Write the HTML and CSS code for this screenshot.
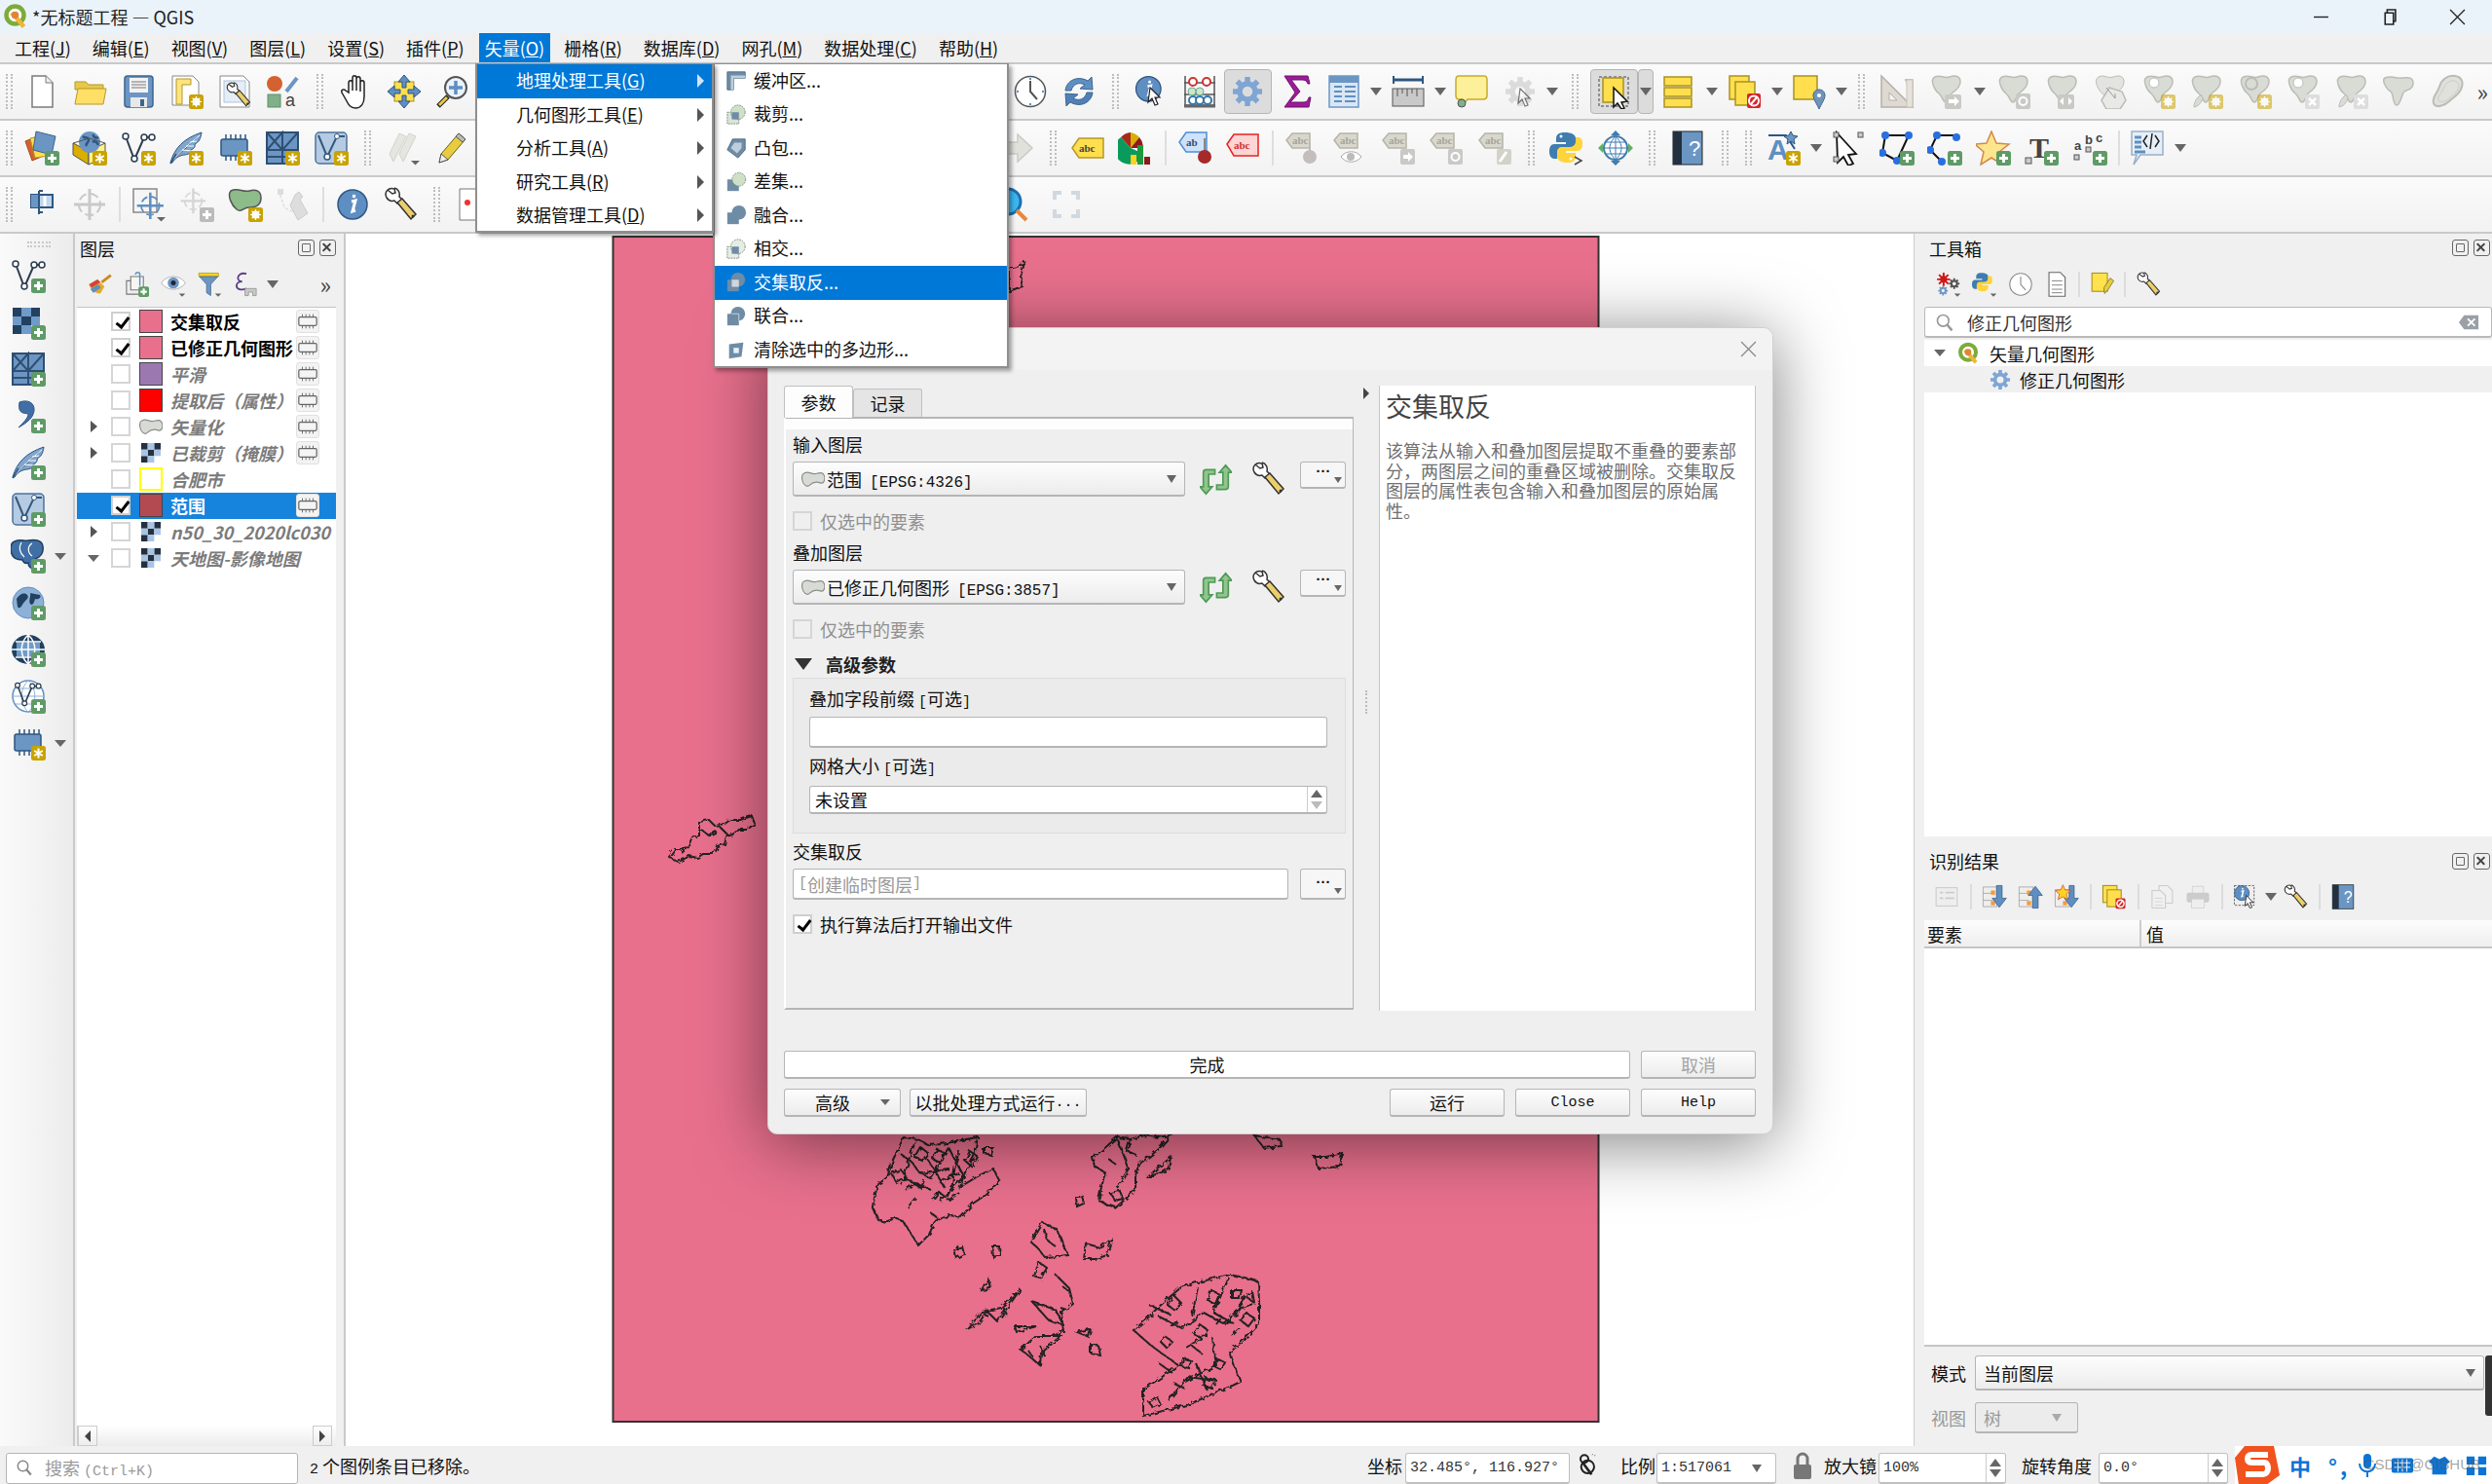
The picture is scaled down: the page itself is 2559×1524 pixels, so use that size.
FILE: index.html
```html
<!DOCTYPE html>
<html lang="zh-CN">
<head>
<meta charset="utf-8">
<title>*无标题工程 — QGIS</title>
<link rel="stylesheet" href="styles.css">
</head>
<body>
<svg class="defs" aria-hidden="true"><defs>
<g id="bp"><rect x="21" y="21" width="15" height="15" rx="2.5" fill="#5f9b66"/><path d="M28.5 24v9M24 28.5h9" stroke="#fff" stroke-width="3"/></g>
<g id="bs"><rect x="21" y="21" width="15" height="15" rx="2.5" fill="#c9a300"/><path d="M28.5 23.5v10M24.2 26l8.6 5M24.2 31l8.6-5" stroke="#fff" stroke-width="2"/></g>
<g id="bo"><rect x="21" y="21" width="15" height="15" rx="2.5" fill="#c9a300"/><circle cx="28.5" cy="28.5" r="3" fill="none" stroke="#fff" stroke-width="2"/><path d="M28.5 23v11M23 28.5h11M24.6 24.6l7.8 7.8M32.4 24.6l-7.8 7.8" stroke="#fff" stroke-width="1.2"/></g>
<g id="dn"><path d="M26 31h9l-4.500 4.500z" fill="#666"/></g>
<path id="blobp" d="M7 3c6-3 9 2 15 0s11-1 11 5-6 10-9 12c-3 3-3 9-6 9s-3-6-7-9C7 17 1 6 7 3z"/>
<g id="vv"><path d="M5 6l9 24L24 7h7" fill="none" stroke="#2c3e50" stroke-width="2"/><circle cx="5" cy="6" r="3" fill="#fff" stroke="#2c3e50" stroke-width="1.500"/><circle cx="14" cy="29" r="3" fill="#fff" stroke="#2c3e50" stroke-width="1.500"/><circle cx="24" cy="7" r="3" fill="#fff" stroke="#2c3e50" stroke-width="1.500"/><circle cx="32" cy="7" r="3" fill="#fff" stroke="#2c3e50" stroke-width="1.500"/></g>
<g id="feather"><path d="M2 33C6 18 16 8 34 2c-1 7-3 10-7 12 1 2-1 5-4 6 0 3-3 5-7 5-5 1-9 3-12 8z" fill="#7ea6cf" stroke="#2f5680"/><path d="M4 31C12 22 20 15 32 5M14 20l10 1M18 16l8 0M22 12l7-1" stroke="#fff"/><path d="M2 34L8 24" stroke="#2f5680" stroke-width="1.500"/></g>
<g id="chipg"><rect x="4" y="9" width="27" height="17" rx="2" fill="#6b96c4" stroke="#2f5680" stroke-width="1.500"/><path d="M9 4v5M14 4v5M19 4v5M24 4v5M29 4v5M9 26v5M14 26v5M19 26v5" stroke="#2f5680" stroke-width="1.500"/></g>
<g id="meshg"><rect x="2" y="2" width="32" height="32" fill="#6b96c4" stroke="#2f4f72" stroke-width="2"/><path d="M2 2l16 18V2L2 20M18 20L34 2M2 20h32M18 20v14M2 27h32" fill="none" stroke="#2f4f72" stroke-width="2"/></g>
<g id="vrg"><rect x="2" y="2" width="32" height="32" rx="4" fill="#b5cbe3" stroke="#4c739b" stroke-width="1.500"/><path d="M5 5l9 22L24 6h8" fill="none" stroke="#35587d" stroke-width="2"/><circle cx="14" cy="27" r="3" fill="#fff" stroke="#35587d" stroke-width="1.500"/><circle cx="24" cy="6" r="2.500" fill="#fff" stroke="#35587d"/></g>
<g id="rastg"><path d="M2 3h9v9H2zM21 3h9v9h-9zM11 12h10v9H11zM2 21h9v9H2z" fill="#22405f"/><path d="M11 3h10v9H11zM2 12h9v9H2zM21 12h9v9h-9zM11 21h10v9H11z" fill="#6f9bc9"/></g>
<g id="wr"><path d="M5 3l5 4 3-1-1-4C6 0 1 5 4 11c2 3 5 4 8 3l3 3 5-4-3-3c1-4-1-8-5-9" fill="#fff" stroke="#333" stroke-width="1.500"/><path d="M15 16l5-4 14 16-5 5z" fill="#eccf6a" stroke="#333" stroke-width="1.500"/><circle cx="31" cy="30" r="1.500" fill="#333"/></g>
<g id="mag"><circle cx="21" cy="14" r="11" fill="#eaf3fb" stroke="#555" stroke-width="2"/><path d="M13 23L3 33" stroke="#222" stroke-width="5"/><path d="M12 24L4 32" stroke="#e8c84a" stroke-width="3"/></g>
<g id="tar"><circle cx="18" cy="18" r="11" fill="none" stroke-dasharray="9 4" stroke-width="2"/><path d="M18 2v32M2 18h32" stroke-width="3"/></g>
<g id="gear"><circle cx="18" cy="18" r="8" fill="none" stroke-width="5.500"/><path d="M18 3v7M18 26v7M3 18h7M26 18h7M7.500 7.500l5 5M23.500 23.500l5 5M28.500 7.500l-5 5M12.500 23.500l-5 5" stroke-width="5.500"/></g>
<g id="ibtn"><circle cx="18" cy="18" r="15" fill="#5f8fc2" stroke="#2f5680" stroke-width="1.500"/><path d="M17 15l4-1-3 11 3-1M20 8l-1 3" fill="none" stroke="#fff" stroke-width="3"/></g>
<g id="arrw"><path d="M16 13l10 10-5 0 3 7-3 1-3-7-4 4z" fill="#fff" stroke="#222" stroke-width="1.200"/></g>
<g id="tagg"><path d="M2 10L8 3h18v15H8z" fill="#d9d8cd" stroke="#b5b4a8" stroke-width="1.500"/><text x="8" y="14" class="svgt" fill="#a5a59a">abc</text></g>

<symbol id="new" viewBox="0 0 36 36"><path d="M8 2h14l7 7v25H8z" fill="#fff" stroke="#7b7b7b" stroke-width="1.500"/><path d="M22 2v7h7" fill="#eee" stroke="#7b7b7b"/></symbol>
<symbol id="open" viewBox="0 0 36 36"><path d="M3 8h11l3 3h15v5H3z" fill="#e8c84a" stroke="#b5982a"/><path d="M3 31l3-16h29l-3 16z" fill="#ffdf66" stroke="#b5982a"/></symbol>
<symbol id="save" viewBox="0 0 36 36"><rect x="4" y="2" width="29" height="32" rx="3" fill="#6b96c4" stroke="#3e648f" stroke-width="1.500"/><rect x="9" y="4" width="19" height="15" fill="#f2f2f2"/><path d="M11 8h15M11 11h15M11 14h15" stroke="#777"/><rect x="10" y="24" width="17" height="10" fill="#e8e8e8"/><rect x="20" y="26" width="4" height="7" fill="#3e648f"/></symbol>
<symbol id="saveas" viewBox="0 0 36 36"><path d="M4 2h21l6 6v24H4z" fill="#fff" stroke="#888"/><path d="M8 5h15v6H14v20H8z" fill="#ffe47a" stroke="#b5982a"/><use href="#bo"/></symbol>
<symbol id="lman" viewBox="0 0 36 36"><path d="M3 2h24l6 6v26H3z" fill="#fff" stroke="#888"/><rect x="7" y="7" width="22" height="22" fill="#e6edf6" stroke="#b0c4dc"/><g transform="translate(8 8) scale(.75)"><use href="#wr"/></g></symbol>
<symbol id="style" viewBox="0 0 36 36"><circle cx="10" cy="10" r="8" fill="#d4612f"/><path d="M22 18L33 4" stroke="#6b96c4" stroke-width="4"/><rect x="3" y="21" width="13" height="13" fill="#7fb08a" stroke="#5f8f68"/><text x="21" y="33" class="svgb" fill="#444">a</text></symbol>
<symbol id="pan" viewBox="0 0 36 36"><path d="M10 19V9c0-3 4-3 4 0v8-13c0-3 4-3 4 0v13-12c0-3 4-3 4 0v13-9c0-3 4-3 4 0v14c0 7-3 12-9 12-5 0-7-3-10-9l-4-7c-1-3 2-4 4-2z" fill="#fff" stroke="#222" stroke-width="1.500"/></symbol>
<symbol id="pansel" viewBox="0 0 36 36"><rect x="8" y="8" width="20" height="20" fill="#ffdf4d" stroke="#a9921f"/><path d="M18 1l6 7h-4v6h-4V8h-4zM18 35l6-7h-4v-6h-4v6h-4zM1 18l7-6v4h6v4H8v4zM35 18l-7-6v4h-6v4h6v4z" fill="#5f8fc2" stroke="#2f5680"/></symbol>
<symbol id="zin" viewBox="0 0 36 36"><use href="#mag"/><path d="M21 7v14M14 14h14" stroke="#5f8fc2" stroke-width="3.500"/></symbol>
<symbol id="clock" viewBox="0 0 36 36"><circle cx="18" cy="18" r="15.500" fill="#fff" stroke="#555" stroke-width="1.500"/><path d="M18 7v11l7 8" fill="none" stroke="#555" stroke-width="2"/><path d="M18 4v2M18 30v2M4 18h2M30 18h2" stroke="#5f8fc2" stroke-width="2"/></symbol>
<symbol id="refresh" viewBox="0 0 36 36"><path d="M4 17C5 7 16 1 27 7l4-4 1 13-13-1 5-4c-6-3-12-1-14 6z" fill="#5f8fc2" stroke="#3e648f"/><path d="M32 19c-1 10-12 16-23 10l-4 4-1-13 13 1-5 4c6 3 12 1 14-6z" fill="#4f80b8" stroke="#3e648f"/></symbol>
<symbol id="ident" viewBox="0 0 36 36"><g transform="scale(.85)"><use href="#ibtn"/></g><g transform="translate(1 1)"><use href="#arrw"/></g></symbol>
<symbol id="abacus" viewBox="0 0 36 36"><path d="M3 2v32M33 2v32M2 9h32M2 21h32M2 32h32" stroke="#555" stroke-width="1.500"/><path d="M2 33h32" stroke="#666" stroke-width="3"/><circle cx="11" cy="8" r="4" fill="#fff" stroke="#c33" stroke-width="2"/><circle cx="25" cy="8" r="4" fill="#fff" stroke="#c33" stroke-width="2"/><circle cx="18" cy="18" r="4" fill="#cfe5c6" stroke="#6a9"/><circle cx="10" cy="18" r="4" fill="#cfe5c6" stroke="#6a9"/><circle cx="11" cy="27" r="4" fill="#fff" stroke="#37a" stroke-width="2"/><circle cx="18" cy="27" r="4" fill="#fff" stroke="#37a" stroke-width="2"/><circle cx="26" cy="27" r="4" fill="#fff" stroke="#37a" stroke-width="2"/></symbol>
<symbol id="gearb" viewBox="0 0 36 36"><use href="#gear" stroke="#7fa5d4" fill="#7fa5d4"/></symbol>
<symbol id="sigma" viewBox="0 0 36 36"><path d="M6 2h24l2 8h-2c-1-3-3-4-6-4H13l9 12-10 11h13c3 0 5-1 6-5h2l-2 10H6l11-15z" fill="#9b1c96" stroke="#6f1270"/></symbol>
<symbol id="table" viewBox="0 0 36 36"><rect x="3" y="2" width="30" height="32" fill="#d9e7f5" stroke="#6b96c4" stroke-width="1.500"/><path d="M3 2h30v7H3z" fill="#6b96c4"/><path d="M8 13h8M19 13h11M8 18h8M19 18h11M8 23h8M19 23h11M8 28h8M19 28h11" stroke="#5f8fc2" stroke-width="2"/></symbol>
<symbol id="ruler" viewBox="0 0 36 36"><path d="M3 6h30" stroke="#2f5680" stroke-width="3"/><path d="M3 2v8M33 2v8" stroke="#2f5680" stroke-width="2"/><rect x="2" y="15" width="32" height="18" fill="#c9c9c9" stroke="#555"/><path d="M7 15v8M12 15v5M17 15v8M22 15v5M27 15v8" stroke="#555"/></symbol>
<symbol id="bubble" viewBox="0 0 36 36"><path d="M5 2h26c3 0 3 2 3 4v16c0 3-2 4-4 4H14l-5 6c1-3 1-5 0-6H5c-3 0-3-2-3-4V6c0-2 1-4 3-4z" fill="#fdf09b" stroke="#caa92a" stroke-width="1.500"/><circle cx="8" cy="30" r="4" fill="#7fb08a" stroke="#555"/></symbol>
<symbol id="gearg" viewBox="0 0 36 36"><g opacity=".6"><use href="#gear" stroke="#c9c9c9" fill="#c9c9c9"/></g><g opacity=".6" transform="translate(2 2)"><use href="#arrw"/></g></symbol>
<symbol id="selrect" viewBox="0 0 36 36"><rect x="3" y="3" width="30" height="30" fill="none" stroke="#444" stroke-dasharray="3 2"/><rect x="7" y="4" width="21" height="25" fill="#ffdf4d" stroke="#a9921f" stroke-width="1.500"/><path d="M18 14l14 14-6 1 3 6-3 1-4-6-4 4z" fill="#fff" stroke="#111" stroke-width="1.500"/></symbol>
<symbol id="rows" viewBox="0 0 36 36"><path d="M4 3h28v9H4zM4 14h28v9H4zM4 25h28v9H4z" fill="#ffdf4d" stroke="#a9921f" stroke-width="1.500"/></symbol>
<symbol id="desel" viewBox="0 0 36 36"><rect x="2" y="2" width="20" height="24" fill="#ffdf4d" stroke="#a9921f" stroke-width="1.500"/><rect x="8" y="8" width="20" height="24" fill="#ffdf4d" stroke="#a9921f" stroke-width="1.500"/><rect x="20" y="20" width="14" height="15" rx="2" fill="#d8232a"/><circle cx="27" cy="27.500" r="5" fill="none" stroke="#fff" stroke-width="2"/><path d="M24 31l6-7" stroke="#fff" stroke-width="2"/></symbol>
<symbol id="selloc" viewBox="0 0 36 36"><rect x="2" y="2" width="24" height="24" fill="#ffdf4d" stroke="#a9921f" stroke-width="1.500"/><path d="M28 16c-4 0-6 3-6 6 0 4 4 9 6 14 2-5 6-10 6-14 0-3-2-6-6-6z" fill="#6f94b8" stroke="#3e648f"/><circle cx="28" cy="22" r="2" fill="#fff"/></symbol>
<symbol id="tri" viewBox="0 0 36 36"><path d="M2 2l32 32H2z M34 34V6H26" fill="#ded9d2" stroke="#b5afa6" stroke-width="1.500"/><path d="M28 6h6v28h-6z" fill="#e6e2dc" stroke="#c9c4bc"/><path d="M10 19l8 8h-8z" fill="#f4f4f4" stroke="#b5afa6"/></symbol>
<symbol id="bl2" viewBox="0 0 36 36"><use href="#blobp" fill="#d9dbd5" stroke="#babdb5" stroke-width="1.500"/><rect x="17" y="21" width="17" height="15" rx="2" fill="#c9c9c5"/><path d="M21 26h6v-3l5 5-5 5v-3h-6z" fill="#fff"/></symbol>
<symbol id="bl3" viewBox="0 0 36 36"><use href="#blobp" fill="#d9dbd5" stroke="#babdb5" stroke-width="1.500"/><rect x="21" y="20" width="15" height="16" rx="2" fill="#c9c9c5"/><circle cx="28.500" cy="28" r="4" fill="none" stroke="#fff" stroke-width="2"/></symbol>
<symbol id="bl4" viewBox="0 0 36 36"><use href="#blobp" fill="#d9dbd5" stroke="#babdb5" stroke-width="1.500"/><rect x="14" y="21" width="17" height="15" rx="2" fill="#c9c9c5"/><path d="M16 28l4-4v8zM29 28l-4-4v8z" fill="#fff"/></symbol>
<symbol id="bl5" viewBox="0 0 36 36"><use href="#blobp" fill="#e3e4df" stroke="#babdb5"/><path d="M18 14l13 4 4 9-6 9H15l-5-9z" fill="#e9e9e6" stroke="#babdb5" stroke-width="1.500"/><path d="M15 14l9 11M24 25v-5" stroke="#999"/></symbol>
<symbol id="bl6" viewBox="0 0 36 36"><use href="#blobp" fill="#d9dbd5" stroke="#babdb5" stroke-width="1.500"/><circle cx="14" cy="9" r="5" fill="#fff" stroke="#babdb5"/><use href="#bo" opacity=".55"/></symbol>
<symbol id="bl7" viewBox="0 0 36 36"><use href="#blobp" fill="#d9dbd5" stroke="#babdb5" stroke-width="1.500"/><path d="M6 34c0-6 4-12 8-12 3 3-2 11-8 12z" fill="#d9dbd5" stroke="#babdb5"/><use href="#bo" opacity=".55"/></symbol>
<symbol id="bl8" viewBox="0 0 36 36"><use href="#blobp" fill="#d9dbd5" stroke="#babdb5" stroke-width="1.500"/><circle cx="15" cy="10" r="6" fill="none" stroke="#babdb5" stroke-width="2"/><use href="#bo" opacity=".55"/></symbol>
<symbol id="bl9" viewBox="0 0 36 36"><use href="#blobp" fill="#d9dbd5" stroke="#babdb5" stroke-width="1.500"/><circle cx="14" cy="9" r="5" fill="#fff" stroke="#babdb5"/><rect x="21" y="21" width="15" height="15" rx="2" fill="#ddd"/><path d="M25 25l7 7M32 25l-7 7" stroke="#fff" stroke-width="2.500"/></symbol>
<symbol id="bl10" viewBox="0 0 36 36"><use href="#blobp" fill="#d9dbd5" stroke="#babdb5" stroke-width="1.500"/><path d="M6 34c0-6 4-12 8-12 3 3-2 11-8 12z" fill="#d9dbd5" stroke="#babdb5"/><rect x="21" y="21" width="15" height="15" rx="2" fill="#ddd"/><path d="M25 25l7 7M32 25l-7 7" stroke="#fff" stroke-width="2.500"/></symbol>
<symbol id="bl11" viewBox="0 0 36 36"><path d="M4 4c8-3 10 1 18 0s11 0 11 6-6 6-9 8c-3 3-4 14-8 14s-3-12-6-14C6 16 0 6 4 4z" fill="#d9dbd5" stroke="#babdb5" stroke-width="1.500"/></symbol>
<symbol id="bl12" viewBox="0 0 36 36"><path d="M4 30C2 24 8 20 10 13S18 1 26 2s9 8 6 14-8 8-12 12-14 8-16 2z" fill="#dfe1da" stroke="#babdb5" stroke-width="2"/><path d="M9 27c-2-3 3-7 5-12s6-9 11-8 6 5 4 9-6 6-9 9-9 5-11 2z" fill="none" stroke="#ccc"/></symbol>
<symbol id="addl" viewBox="0 0 36 36"><path d="M1 11l15-6 6 20-14 6z" fill="#d4612f" stroke="#a8491f"/><path d="M6 8l15-3 4 21-14 2z" fill="#ffdf4d" stroke="#b5982a"/><path d="M12 1l20 5-4 19-19-5z" fill="#6b96c4" stroke="#3e648f"/><use href="#bp"/></symbol>
<symbol id="boxg" viewBox="0 0 36 36"><path d="M1 13l16 8v14L1 25z" fill="#d9ae00" stroke="#555"/><path d="M17 21l17-8v14l-17 8z" fill="#fff28a" stroke="#555"/><circle cx="18" cy="12" r="11" fill="#6b96c4"/><path d="M11 6c3 3 5 0 6 3s-4 4-2 7M22 4c-1 3 3 4 5 3M21 12c2-2 5 0 6 3" stroke="#2f5680" stroke-width="2.500" fill="none"/><path d="M1 13l17-5 16 5" fill="none" stroke="#555"/><use href="#bs"/></symbol>
<symbol id="vs" viewBox="0 0 36 36"><use href="#vv"/><use href="#bs"/></symbol>
<symbol id="vp" viewBox="0 0 36 36"><use href="#vv"/><use href="#bp"/></symbol>
<symbol id="fs" viewBox="0 0 36 36"><use href="#feather"/><use href="#bs"/></symbol>
<symbol id="fp" viewBox="0 0 36 36"><use href="#feather"/><use href="#bp"/></symbol>
<symbol id="cs" viewBox="0 0 36 36"><use href="#chipg"/><use href="#bs"/></symbol>
<symbol id="ms" viewBox="0 0 36 36"><use href="#meshg"/><use href="#bs"/></symbol>
<symbol id="mp" viewBox="0 0 36 36"><use href="#meshg"/><use href="#bp"/></symbol>
<symbol id="vrs" viewBox="0 0 36 36"><use href="#vrg"/><use href="#bs"/></symbol>
<symbol id="vrp" viewBox="0 0 36 36"><use href="#vrg"/><use href="#bp"/></symbol>
<symbol id="rp" viewBox="0 0 36 36"><use href="#rastg"/><use href="#bp"/></symbol>
<symbol id="comma" viewBox="0 0 36 36"><path d="M9 4c8-3 16 0 15 9-1 7-7 12-16 17 6-6 10-10 10-14-5-1-11 0-9-12z" fill="#3f6fa5" stroke="#2f5680"/><use href="#bp"/></symbol>
<symbol id="pencg" viewBox="0 0 36 36"><g opacity=".55"><path d="M8 32l-4-8L14 3l7 3-10 20z" fill="#d9d8d0" stroke="#b5b4a8"/><path d="M18 32l-4-8L24 3l7 3-10 20z" fill="#d9d8d0" stroke="#b5b4a8"/></g><use href="#dn"/></symbol>
<symbol id="penc" viewBox="0 0 36 36"><path d="M5 33l2-9L25 3l7 6-18 21z" fill="#e8cc3f" stroke="#6b6020"/><path d="M7 24l7 6-9 3z" fill="#eee" stroke="#555"/><path d="M25 3l7 6-3 3-7-6z" fill="#bbb" stroke="#555"/></symbol>
<symbol id="arrg" viewBox="0 0 36 36"><path d="M18 4l15 14-15 14v-8H3V12h15z" fill="#dfe1da" stroke="#c9cbc4" stroke-width="1.500"/></symbol>
<symbol id="tagy" viewBox="0 0 36 36"><path d="M2 18l7-10h25v20H9z" fill="#ffdf4d" stroke="#b5982a" stroke-width="1.500"/><text x="9" y="22" class="svgt" fill="#444">abc</text></symbol>
<symbol id="pie" viewBox="0 0 36 36"><path d="M13 18V2a15 15 0 0 1 9 5z" fill="#d9ae00"/><path d="M13 18L22 7a15 15 0 0 1 2 17v-6z" fill="#8e1b1b"/><path d="M13 18L3 7a15 15 0 0 1 10-5z" fill="#a52a1a"/><path d="M13 18L3 7a15 15 0 0 0 17 25l2-10z" fill="#0a9a5c"/><rect x="13" y="25" width="6" height="10" fill="#ffd21f"/><rect x="20" y="15" width="6" height="20" fill="#1a9a3c"/><rect x="27" y="27" width="6" height="8" fill="#8e1b1b"/></symbol>
<symbol id="tagb" viewBox="0 0 36 36"><path d="M2 12l7-10h21v20H9z" fill="#cfe2fa" stroke="#4c8fdc" stroke-width="1.500"/><text x="9" y="16" class="svgt" fill="#2f4f72">ab</text><path d="M28 8v14" stroke="#888" stroke-width="2"/><circle cx="28" cy="27" r="7" fill="#a52a2a"/></symbol>
<symbol id="tagr" viewBox="0 0 36 36"><path d="M2 14l7-10h25v22H9z" fill="#ffd4d4" stroke="#e82222" stroke-width="1.500"/><text x="9" y="19" class="svgt" fill="#c33">abc</text></symbol>
<symbol id="tg1" viewBox="0 0 36 36"><use href="#tagg"/><path d="M26 12v10" stroke="#bbb" stroke-width="2"/><circle cx="26" cy="27" r="7" fill="#c4bdbd"/></symbol>
<symbol id="tg2" viewBox="0 0 36 36"><use href="#tagg"/><path d="M9 27c5-7 16-7 21 0-5 7-16 7-21 0z" fill="#fff" stroke="#aaa"/><circle cx="19" cy="27" r="4" fill="#bbb"/></symbol>
<symbol id="tg3" viewBox="0 0 36 36"><use href="#tagg"/><rect x="20" y="19" width="15" height="16" rx="2" fill="#c9c9c5"/><path d="M23 25h5v-3l5 5-5 5v-3h-5z" fill="#fff"/></symbol>
<symbol id="tg4" viewBox="0 0 36 36"><use href="#tagg"/><rect x="20" y="19" width="15" height="16" rx="2" fill="#c9c9c5"/><circle cx="27.500" cy="27" r="4" fill="none" stroke="#fff" stroke-width="2"/></symbol>
<symbol id="tg5" viewBox="0 0 36 36"><use href="#tagg"/><rect x="20" y="19" width="15" height="16" rx="2" fill="#d3d2c9"/><path d="M23 32l7-10" stroke="#fff" stroke-width="3"/></symbol>
<symbol id="py" viewBox="0 0 36 36"><path d="M16 2c-6 0-9 2-9 6v4h10v2H5c-4 0-5 4-5 8s2 7 5 7h3v-5c0-4 3-6 7-6h7c3 0 5-2 5-5V8c0-4-5-6-11-6z" fill="#3f7cb0"/><path d="M18 33c6 0 9-2 9-6v-4H17v-2h12c4 0 5-4 5-8s-2-6-5-6h-2v4c0 4-3 6-7 6h-7c-3 0-5 2-5 5v5c0 4 5 6 11 6z" fill="#ffd43b"/><circle cx="12" cy="6" r="1.500" fill="#fff"/><circle cx="22" cy="29" r="1.500" fill="#fff"/><path d="M26 27l7 4-7 4" fill="none" stroke="#444" stroke-width="1.500"/></symbol>
<symbol id="globea" viewBox="0 0 36 36"><circle cx="18" cy="18" r="12" fill="#fff" stroke="#3f7cb0" stroke-width="2"/><path d="M18 6c-8 8-8 16 0 24M18 6c8 8 8 16 0 24M6 18h24M8 12h20M8 24h20M18 6v24" fill="none" stroke="#3f7cb0"/><path d="M18 0l5 5H13zM18 36l5-5H13z" fill="#3f7cb0"/><path d="M0 18l5-5v10zM36 18l-5-5v10z" fill="#5fb35f"/></symbol>
<symbol id="help" viewBox="0 0 36 36"><rect x="3" y="1" width="30" height="34" fill="#6b96c4" stroke="#222"/><rect x="3" y="1" width="9" height="34" fill="#22303f"/><text x="19" y="26" class="svgq" fill="#fff">?</text></symbol>
<symbol id="alab" viewBox="0 0 36 36"><path d="M3 5h18l9 14" fill="none" stroke="#2f5680" stroke-width="2"/><path d="M26 1l2 4 5 1-4 3 1 5-4-3-4 3 1-5-4-3 5-1z" fill="#6b96c4" stroke="#2f5680"/><text x="2" y="30" class="svgA" fill="#5f8fc2">A</text><use href="#bs"/></symbol>
<symbol id="curs" viewBox="0 0 36 36"><path d="M6 2l20 22-8 1 5 9-5 2-5-9-6 6z" fill="#fff" stroke="#111" stroke-width="1.800"/><g fill="#ccc" stroke="#555"><rect x="3" y="2" width="5" height="5"/><rect x="28" y="2" width="5" height="5"/><rect x="3" y="27" width="5" height="5"/></g></symbol>
<symbol id="polyp" viewBox="0 0 36 36"><path d="M6 5h24L18 31 3 23z" fill="none" stroke="#111" stroke-width="2"/><g fill="#2a6fe0"><circle cx="6" cy="5" r="4"/><circle cx="30" cy="5" r="4"/><circle cx="18" cy="31" r="4"/><circle cx="3" cy="23" r="4"/></g><use href="#bp"/></symbol>
<symbol id="linep" viewBox="0 0 36 36"><path d="M10 5h20M10 5L3 20l12 12" fill="none" stroke="#111" stroke-width="2"/><g fill="#2a6fe0"><circle cx="10" cy="5" r="4"/><circle cx="30" cy="7" r="4"/><circle cx="15" cy="32" r="4"/><circle cx="3" cy="20" r="4"/></g><use href="#bp"/></symbol>
<symbol id="starp" viewBox="0 0 36 36"><path d="M16 1l5 12 13 1-10 8 3 13-11-7-11 7 3-13L-1 14l12-1z" fill="#fde58e" stroke="#d08a4a" stroke-width="1.500"/><use href="#bp"/></symbol>
<symbol id="tp" viewBox="0 0 36 36"><text x="6" y="28" class="svgT" fill="#444">T</text><rect x="2" y="28" width="6" height="6" fill="#ccc" stroke="#555"/><use href="#bp"/></symbol>
<symbol id="abcp" viewBox="0 0 36 36"><text x="2" y="20" class="svgc" fill="#444">a</text><text x="13" y="14" class="svgc" fill="#444">b</text><text x="24" y="12" class="svgc" fill="#444">c</text><rect x="2" y="25" width="5" height="5" fill="#ccc" stroke="#555"/><rect x="14" y="17" width="5" height="5" fill="#ccc" stroke="#555"/><use href="#bp"/></symbol>
<symbol id="code" viewBox="0 0 36 36"><path d="M1 1h32v24H10l-7 10 3-10H1z" fill="#e6eef7" stroke="#9ab0c9" stroke-width="1.500"/><path d="M4 7h7M4 12h7M4 17h7M4 22h11" stroke="#5f8fc2" stroke-width="3"/><path d="M17 5l-4 6 4 6M25 5l4 6-4 6M22 3l-2 16" fill="none" stroke="#222" stroke-width="1.500"/></symbol>
<symbol id="coord" viewBox="0 0 36 36"><rect x="7" y="8" width="22" height="13" fill="#c0d7ef" stroke="#2f5680" stroke-width="2"/><rect x="7" y="8" width="8" height="13" fill="#6b96c4"/><path d="M15 4v24M15 4h4M15 26h4" stroke="#2f5680" stroke-width="2"/><path d="M21 9v11" stroke="#fff" stroke-width="3"/></symbol>
<symbol id="targ1" viewBox="0 0 36 36"><use href="#tar" stroke="#c9c9c9"/></symbol>
<symbol id="targ2" viewBox="0 0 36 36"><rect x="2" y="2" width="24" height="24" fill="#f5f5f5" stroke="#888" stroke-width="1.500"/><use href="#tar" stroke="#5f8fc2" transform="translate(4 4) scale(.85)"/><use href="#dn"/></symbol>
<symbol id="targ3" viewBox="0 0 36 36"><use href="#tar" stroke="#d5d5d5" transform="scale(.8)"/><rect x="21" y="21" width="15" height="15" rx="2" fill="#bbb"/><path d="M28.500 24v9M24 28.500h9" stroke="#fff" stroke-width="3"/></symbol>
<symbol id="gblob" viewBox="0 0 36 36"><path d="M3 4c8-4 12 2 19 0s12 0 12 7-5 10-12 10-8 6-13 2S-1 9 3 4z" fill="#8dbb8a" stroke="#555" stroke-width="1.500"/><use href="#bo"/></symbol>
<symbol id="brushg" viewBox="0 0 36 36"><path d="M5 3v6l4 12 10 5" fill="none" stroke="#ddd" stroke-dasharray="3 2" stroke-width="1.500"/><rect x="2" y="2" width="6" height="6" fill="#ddd"/><path d="M20 8l4-3 4 5-3 3 8 14-10 7-8-15z" fill="#ddd" stroke="#ccc"/></symbol>
<symbol id="info" viewBox="0 0 36 36"><use href="#ibtn"/></symbol>
<symbol id="wrench" viewBox="0 0 36 36"><use href="#wr"/></symbol>
<symbol id="docr" viewBox="0 0 36 36"><path d="M4 2h18l8 8v24H4z" fill="#fff" stroke="#777"/><circle cx="12" cy="16" r="3" fill="#e33"/></symbol>
<symbol id="magb" viewBox="0 0 36 36"><circle cx="15" cy="15" r="13" fill="#3bb6ef" stroke="#1d6fb0" stroke-width="3"/><path d="M24 24l10 10" stroke="#e8873a" stroke-width="4"/></symbol>
<symbol id="full" viewBox="0 0 36 36"><path d="M6 13V6h7M23 6h7v7M30 23v7h-7M13 30H6v-7" fill="none" stroke="#d2d8df" stroke-width="4"/></symbol>
<symbol id="brush" viewBox="0 0 36 36"><path d="M2 18l12-7 10 10-6 10C10 31 4 26 2 18z" fill="#e6a92a"/><path d="M2 18l12-7 4 4-12 8z" fill="#d0443a"/><path d="M4 25l11-7 4 5-11 7z" fill="#5f8fc2"/><path d="M20 15L33 5" stroke="#c98a1f" stroke-width="4"/></symbol>
<symbol id="group" viewBox="0 0 36 36"><path d="M4 13h20v19H4z" fill="#eee" stroke="#777" stroke-width="1.500"/><path d="M10 7h18v19H10z" fill="#f6f6f6" stroke="#777" stroke-width="1.500"/><path d="M17 4c0-4 6-4 6 0v16" fill="none" stroke="#5f8fc2" stroke-width="2"/><use href="#bp"/></symbol>
<symbol id="eye" viewBox="0 0 36 36"><path d="M1 16c8-12 26-12 34 0-8 12-26 12-34 0z" fill="#fff" stroke="#999"/><circle cx="18" cy="16" r="8" fill="#6b96c4"/><circle cx="18" cy="16" r="3.500" fill="#223"/><use href="#dn"/></symbol>
<symbol id="filter" viewBox="0 0 36 36"><path d="M3 2h28v5H3z" fill="#ffd21f" stroke="#a9921f"/><path d="M4 7h26L20 18v16l-6-4V18z" fill="#6b96c4" stroke="#3e648f"/><use href="#dn"/></symbol>
<symbol id="eps" viewBox="0 0 36 36"><path d="M18 3C10 1 6 5 6 9c0 3 3 5 6 5-4 0-8 2-8 6 0 5 7 7 14 4" fill="none" stroke="#5c3a86" stroke-width="2.500"/><path d="M16 24h16v10h-5v-5h-6v5h-5z" fill="#c9c9c9" stroke="#888"/></symbol>
<symbol id="elephant" viewBox="0 0 36 36"><path d="M4 3c6-3 10 0 14-1 6-1 14-1 15 6s-2 11-8 13v9c-4 2-7-1-7-5-3 1-5 0-6-3-5 0-12-2-12-12 0-3 1-6 4-7z" fill="#3f6fa5" stroke="#1f3f63" stroke-width="1.500"/><path d="M11 4c-3 5-2 11 3 15M22 5c-5 3-5 9 0 13" fill="none" stroke="#fff" stroke-width="1.200"/><use href="#bp"/></symbol>
<symbol id="wms" viewBox="0 0 36 36"><circle cx="18" cy="18" r="16" fill="#8db0d6" stroke="#5f8fc2"/><path d="M6 14c3-5 8-7 11-4s-3 6-5 10-4 4-5 2M20 8l10 2c2 3-2 5-5 4-1 4-3 8-5 5s1-8 0-11z" fill="#22405f"/><use href="#bp"/></symbol>
<symbol id="wcs" viewBox="0 0 36 36"><ellipse cx="18" cy="18" rx="17" ry="15" fill="#22405f"/><path d="M6 11h24v14H6z" fill="#6f9bc9"/><path d="M18 3c-9 8-9 22 0 30M18 3c9 8 9 22 0 30M18 3v30M1 18h34M5 10h26M5 26h26" fill="none" stroke="#fff" stroke-width="1.500"/><use href="#bp"/></symbol>
<symbol id="wfs" viewBox="0 0 36 36"><circle cx="18" cy="18" r="16" fill="#fff" stroke="#5f8fc2" stroke-width="1.500"/><path d="M18 2c-9 8-9 24 0 32M18 2c9 8 9 24 0 32M2 18h32M5 10h26M5 26h26" fill="none" stroke="#8db0d6"/><g transform="translate(3 2) scale(.8)"><use href="#vv"/></g><use href="#bp"/></symbol>
<symbol id="ttool" viewBox="0 0 36 36"><g fill="#d01818" transform="translate(1 1) scale(.55)"><circle cx="18" cy="18" r="9"/><path d="M18 1v34M1 18h34M6 6l24 24M30 6L6 30" stroke="#d01818" stroke-width="5"/></g><g transform="translate(17 8) scale(.5)"><use href="#gear" stroke="#555" fill="#555"/></g><g transform="translate(2 19) scale(.45)"><use href="#gear" stroke="#6b96c4" fill="#6b96c4"/></g><use href="#dn"/></symbol>
<symbol id="pyd" viewBox="0 0 36 36"><g transform="scale(.85)"><path d="M16 2c-6 0-9 2-9 6v4h10v2H5c-4 0-5 4-5 8s2 7 5 7h3v-5c0-4 3-6 7-6h7c3 0 5-2 5-5V8c0-4-5-6-11-6z" fill="#3f7cb0"/><path d="M18 33c6 0 9-2 9-6v-4H17v-2h12c4 0 5-4 5-8s-2-6-5-6h-2v4c0 4-3 6-7 6h-7c-3 0-5 2-5 5v5c0 4 5 6 11 6z" fill="#ffd43b"/></g><use href="#dn"/></symbol>
<symbol id="clk2" viewBox="0 0 36 36"><circle cx="18" cy="18" r="15.500" fill="#fff" stroke="#888" stroke-width="1.500"/><path d="M18 7v11l7 8" fill="none" stroke="#888" stroke-width="1.500"/></symbol>
<symbol id="docl" viewBox="0 0 36 36"><path d="M7 1h16l7 7v27H7z" fill="#fff" stroke="#666" stroke-width="1.500"/><path d="M11 13h15M11 19h15M11 25h15M11 30h15" stroke="#555"/></symbol>
<symbol id="penn" viewBox="0 0 36 36"><rect x="3" y="2" width="22" height="26" fill="#ffe24d" stroke="#a9921f" stroke-width="1.500"/><path d="M21 31l-1-8 9-14 5 4-9 14z" fill="#e8cc3f" stroke="#6b6020"/></symbol>
<symbol id="cexp" viewBox="0 0 36 36"><rect x="3" y="5" width="30" height="26" fill="#eee" stroke="#ccc" stroke-width="1.500"/><path d="M8 12h5M8 20h5M16 12h13M16 20h13" stroke="#ccc" stroke-width="2.500"/></symbol>
<symbol id="tdn" viewBox="0 0 36 36"><path d="M2 4h20v28H2z" fill="#eee" stroke="#999"/><path d="M2 13h14M2 23h14" stroke="#999"/><rect x="13" y="9" width="6" height="6" fill="#f39c3d"/><rect x="13" y="24" width="6" height="6" fill="#f39c3d"/><path d="M21 2h8v18h6L25 33 15 20h6z" fill="#5f8fc2" stroke="#2f5680"/></symbol>
<symbol id="tup" viewBox="0 0 36 36"><path d="M2 4h20v28H2z" fill="#eee" stroke="#999"/><path d="M2 13h14M2 23h14" stroke="#999"/><rect x="13" y="9" width="6" height="6" fill="#f39c3d"/><rect x="13" y="24" width="6" height="6" fill="#f39c3d"/><path d="M21 34h8V16h6L25 3 15 16h6z" fill="#5f8fc2" stroke="#2f5680"/></symbol>
<symbol id="tst" viewBox="0 0 36 36"><path d="M2 8h20v24H2z" fill="#eee" stroke="#999"/><rect x="13" y="24" width="6" height="6" fill="#f39c3d"/><path d="M22 2h7v18h6L25 33 15 20h7z" fill="#5f8fc2" stroke="#2f5680"/><path d="M13 1l3 7 8 1-6 5 2 8-7-4-7 4 2-8-6-5 8-1z" fill="#ffd21f" stroke="#d0443a"/></symbol>
<symbol id="copy" viewBox="0 0 36 36"><g fill="#f0f0f0" stroke="#ccc" stroke-width="1.500"><path d="M14 2h12l7 7v18H14z"/><path d="M4 9h12l7 7v18H4z"/></g><path d="M8 20h11M8 25h11M8 30h11" stroke="#ccc"/></symbol>
<symbol id="print" viewBox="0 0 36 36"><rect x="10" y="3" width="16" height="10" fill="#eee" stroke="#ccc"/><rect x="2" y="12" width="32" height="14" rx="3" fill="#ccc"/><rect x="9" y="21" width="18" height="13" fill="#eee" stroke="#ccc"/></symbol>
<symbol id="idsel" viewBox="0 0 36 36"><rect x="2" y="2" width="28" height="28" fill="#eee" stroke="#333" stroke-dasharray="3 2"/><g transform="scale(.7)"><use href="#ibtn"/></g><g transform="translate(3 3)"><use href="#arrw"/></g></symbol>
<symbol id="mico" viewBox="0 0 36 36"><circle cx="15" cy="8" r="6" fill="none" stroke="#222" stroke-width="3"/><circle cx="20" cy="20" r="10" fill="none" stroke="#222" stroke-width="3"/><path d="M12 13l14 19" stroke="#222" stroke-width="4"/><path d="M30 3l2-1M27 2l1-2" stroke="#555"/></symbol>
<symbol id="chip" viewBox="0 0 36 36"><rect x="3" y="11" width="30" height="14" rx="2" fill="#f4f4f4" stroke="#666" stroke-width="2"/><path d="M9 6v5M15 6v5M21 6v5M27 6v5M9 25v5M15 25v5M21 25v5M27 25v5" stroke="#666" stroke-width="1.500"/></symbol>
<symbol id="sync" viewBox="0 0 36 36"><path d="M17 7H7C5 7 4 8 4 10v16H0l7 8 7-8h-4V12h7zM19 29h10c2 0 3-1 3-3V10h4l-7-8-7 8h4v14H19z" fill="#92c48e" stroke="#4e9a55" stroke-width="1.800"/></symbol>
<symbol id="qgis" viewBox="0 0 36 36"><circle cx="18" cy="16" r="12" fill="#fff" stroke="#7cab3b" stroke-width="6"/><path d="M13 13l7 7 10 12" fill="none" stroke="#efb637" stroke-width="6"/><circle cx="18" cy="16" r="5" fill="#e0843a"/></symbol>
<symbol id="pgon" viewBox="2 3 31 22"><path d="M6 6c6-3 9 2 14 1s10-3 12 2 0 12-5 10-10-1-14 3-9-1-10-7 0-8 3-9z" fill="#d8dad6" stroke="#8a8d88" stroke-width="1.500"/></symbol>
<symbol id="rr" viewBox="5 3 24 24"><path d="M5 3h8v8H5zM21 3h8v8h-8zM13 11h8v8h-8zM5 19h8v8H5z" fill="#22303f"/><path d="M13 3h8v8h-8zM5 11h8v8H5zM21 11h8v8h-8zM13 19h8v8h-8z" fill="#a9c4e4"/></symbol>
<filter id="rough" x="-10%" y="-10%" width="120%" height="120%"><feTurbulence type="fractalNoise" baseFrequency=".2" numOctaves="2" seed="7"/><feDisplacementMap in="SourceGraphic" scale="5"/></filter>
</defs></svg>

<div class="app">
  <header class="title">
    <svg class="tlogo"><use href="#qgis"/></svg>
    <span class="ttext">*无标题工程 — QGIS</span>
    <span class="wctl">
      <svg viewBox="0 0 16 16"><path d="M1 8h14" stroke="#222" stroke-width="1.300"/></svg>
      <svg viewBox="0 0 16 16"><path d="M4 4h8v11H4zM6 4V1h8v11h-2" fill="none" stroke="#222" stroke-width="1.500"/></svg>
      <svg viewBox="0 0 16 16"><path d="M1 1l14 14M15 1L1 15" stroke="#222" stroke-width="1.200"/></svg>
    </span>
  </header>
  <nav class="menubar">
    <span class="mi">工程(<u>J</u>)</span><span class="mi">编辑(<u>E</u>)</span><span class="mi">视图(<u>V</u>)</span><span class="mi">图层(<u>L</u>)</span><span class="mi">设置(<u>S</u>)</span><span class="mi">插件(<u>P</u>)</span><span class="mi on">矢量(<u>O</u>)</span><span class="mi">栅格(<u>R</u>)</span><span class="mi">数据库(<u>D</u>)</span><span class="mi">网孔(<u>M</u>)</span><span class="mi">数据处理(<u>C</u>)</span><span class="mi">帮助(<u>H</u>)</span>
  </nav>

  <div class="tb">
    <b class="h w18"></b>
    <i class="t"><svg><use href="#new"/></svg></i><i class="t"><svg><use href="#open"/></svg></i><i class="t"><svg><use href="#save"/></svg></i><i class="t"><svg><use href="#saveas"/></svg></i><i class="t"><svg><use href="#lman"/></svg></i><i class="t"><svg><use href="#style"/></svg></i>
    <b class="h w26"></b>
    <i class="t"><svg><use href="#pan"/></svg></i><i class="t"><svg><use href="#pansel"/></svg></i><i class="t"><svg><use href="#zin"/></svg></i>
    <b class="under r1"></b>
    <i class="t"><svg><use href="#clock"/></svg></i><i class="t"><svg><use href="#refresh"/></svg></i>
    <b class="h w25"></b>
    <i class="t"><svg><use href="#ident"/></svg></i><i class="t"><svg><use href="#abacus"/></svg></i><i class="t act"><svg><use href="#gearb"/></svg></i><i class="t"><svg><use href="#sigma"/></svg></i><i class="t"><svg><use href="#table"/></svg></i><b class="c"></b><i class="t"><svg><use href="#ruler"/></svg></i><b class="c"></b><i class="t"><svg><use href="#bubble"/></svg></i><i class="t"><svg><use href="#gearg"/></svg></i><b class="c"></b>
    <b class="h w31"></b>
    <i class="t act"><svg><use href="#selrect"/></svg></i><b class="c act2"></b><i class="t"><svg><use href="#rows"/></svg></i><b class="c c20"></b><i class="t"><svg><use href="#desel"/></svg></i><b class="c"></b><i class="t"><svg><use href="#selloc"/></svg></i><b class="c"></b>
    <b class="h w25"></b>
    <i class="t"><svg><use href="#tri"/></svg></i><i class="t"><svg><use href="#bl2"/></svg></i><b class="c c20"></b><i class="t"><svg><use href="#bl3"/></svg></i><i class="t"><svg><use href="#bl4"/></svg></i><i class="t"><svg><use href="#bl5"/></svg></i><i class="t"><svg><use href="#bl6"/></svg></i><i class="t"><svg><use href="#bl7"/></svg></i><i class="t"><svg><use href="#bl8"/></svg></i><i class="t"><svg><use href="#bl9"/></svg></i><i class="t"><svg><use href="#bl10"/></svg></i><i class="t"><svg><use href="#bl11"/></svg></i><i class="t"><svg><use href="#bl12"/></svg></i>
    <span class="more mr1">»</span>
  </div>
  <div class="tb">
    <b class="h w18"></b>
    <i class="t"><svg><use href="#addl"/></svg></i><i class="t"><svg><use href="#boxg"/></svg></i><i class="t"><svg><use href="#vs"/></svg></i><i class="t"><svg><use href="#fs"/></svg></i><i class="t"><svg><use href="#cs"/></svg></i><i class="t"><svg><use href="#ms"/></svg></i><i class="t"><svg><use href="#vrs"/></svg></i>
    <b class="h w25"></b>
    <i class="t"><svg><use href="#pencg"/></svg></i><i class="t"><svg><use href="#penc"/></svg></i>
    <b class="under r2"></b>
    <i class="t"><svg><use href="#arrg"/></svg></i>
    <b class="h w22"></b>
    <i class="t"><svg><use href="#tagy"/></svg></i><i class="t"><svg><use href="#pie"/></svg></i>
    <b class="s"></b>
    <i class="t"><svg><use href="#tagb"/></svg></i><i class="t"><svg><use href="#tagr"/></svg></i>
    <b class="s"></b>
    <i class="t"><svg><use href="#tg1"/></svg></i><i class="t"><svg><use href="#tg2"/></svg></i><i class="t"><svg><use href="#tg3"/></svg></i><i class="t"><svg><use href="#tg4"/></svg></i><i class="t"><svg><use href="#tg5"/></svg></i>
    <b class="h w25"></b>
    <i class="t"><svg><use href="#py"/></svg></i><i class="t"><svg><use href="#globea"/></svg></i>
    <b class="h w25"></b>
    <i class="t"><svg><use href="#help"/></svg></i>
    <b class="h w26"></b><b class="h w22"></b>
    <i class="t"><svg><use href="#alab"/></svg></i><b class="c c18"></b><i class="t"><svg><use href="#curs"/></svg></i><i class="t"><svg><use href="#polyp"/></svg></i><i class="t"><svg><use href="#linep"/></svg></i><i class="t"><svg><use href="#starp"/></svg></i><i class="t"><svg><use href="#tp"/></svg></i><i class="t"><svg><use href="#abcp"/></svg></i>
    <b class="s"></b>
    <i class="t"><svg><use href="#code"/></svg></i><b class="c"></b>
  </div>
  <div class="tb">
    <b class="h w18"></b>
    <i class="t"><svg><use href="#coord"/></svg></i><i class="t"><svg><use href="#targ1"/></svg></i>
    <b class="s"></b>
    <i class="t"><svg><use href="#targ2"/></svg></i><i class="t"><svg><use href="#targ3"/></svg></i><i class="t"><svg><use href="#gblob"/></svg></i><i class="t"><svg><use href="#brushg"/></svg></i>
    <b class="s"></b>
    <i class="t"><svg><use href="#info"/></svg></i><i class="t"><svg><use href="#wrench"/></svg></i>
    <b class="h w25"></b>
    <i class="t"><svg><use href="#docr"/></svg></i>
    <b class="under r3"></b>
    <i class="t"><svg><use href="#magb"/></svg></i><b class="gap7"></b><i class="t"><svg><use href="#full"/></svg></i>
  </div>

  <main class="main">
    <aside class="leftbar">
      <div class="vgrip"></div>
      <i class="lt"><svg><use href="#vp"/></svg></i>
      <i class="lt"><svg><use href="#rp"/></svg></i>
      <i class="lt"><svg><use href="#mp"/></svg></i>
      <i class="lt"><svg><use href="#comma"/></svg></i>
      <i class="lt"><svg><use href="#fp"/></svg></i>
      <i class="lt"><svg><use href="#vrp"/></svg></i>
      <i class="lt cd"><svg><use href="#elephant"/></svg></i>
      <i class="lt"><svg><use href="#wms"/></svg></i>
      <i class="lt"><svg><use href="#wcs"/></svg></i>
      <i class="lt"><svg><use href="#wfs"/></svg></i>
      <i class="lt cd"><svg><use href="#cs"/></svg></i>
    </aside>

    <section class="layers">
      <div class="dockh"><span>图层</span><span class="fl"><b></b><b class="x"></b></span></div>
      <div class="lbar">
        <i class="st"><svg><use href="#brush"/></svg></i><i class="st"><svg><use href="#group"/></svg></i><i class="st"><svg><use href="#eye"/></svg></i><i class="st"><svg><use href="#filter"/></svg></i><i class="st"><svg><use href="#eps"/></svg></i><b class="c"></b>
        <span class="more mr2">»</span>
      </div>
      <div class="tree">
        <div class="lr b"><b class="tw"></b><b class="ck on"></b><b class="sw pink"></b><span class="nm">交集取反</span><i class="ind"><svg><use href="#chip"/></svg></i></div>
        <div class="lr b"><b class="tw"></b><b class="ck on"></b><b class="sw pink"></b><span class="nm">已修正几何图形</span><i class="ind"><svg><use href="#chip"/></svg></i></div>
        <div class="lr g"><b class="tw"></b><b class="ck"></b><b class="sw purple"></b><span class="nm">平滑</span><i class="ind"><svg><use href="#chip"/></svg></i></div>
        <div class="lr g"><b class="tw"></b><b class="ck"></b><b class="sw red"></b><span class="nm">提取后（属性）</span><i class="ind"><svg><use href="#chip"/></svg></i></div>
        <div class="lr g"><b class="tw right"></b><b class="ck"></b><svg class="lic"><use href="#pgon"/></svg><span class="nm">矢量化</span><i class="ind"><svg><use href="#chip"/></svg></i></div>
        <div class="lr g"><b class="tw right"></b><b class="ck"></b><svg class="lic r"><use href="#rr"/></svg><span class="nm">已裁剪（掩膜）</span><i class="ind"><svg><use href="#chip"/></svg></i></div>
        <div class="lr g"><b class="tw"></b><b class="ck"></b><b class="sw yel"></b><span class="nm">合肥市</span></div>
        <div class="lr sel"><b class="tw"></b><b class="ck on"></b><b class="sw brick"></b><span class="nm">范围</span><i class="ind"><svg><use href="#chip"/></svg></i></div>
        <div class="lr g"><b class="tw right"></b><b class="ck"></b><svg class="lic r"><use href="#rr"/></svg><span class="nm">n50_30_2020lc030</span></div>
        <div class="lr g"><b class="tw down"></b><b class="ck"></b><svg class="lic r"><use href="#rr"/></svg><span class="nm">天地图-影像地图</span></div>
      </div>
      <div class="hscroll"><b class="sb lf"></b><span class="sbfill"></span><b class="sb rt"></b></div>
    </section>

    <section class="canvas">
      <svg class="map" viewBox="355 240 1610 1246" aria-label="地图画布">
        <rect x="629.500" y="243" width="1012" height="1217" fill="#e8708d" stroke="#333" stroke-width="2"/>
        <g fill="none" stroke="#222" stroke-width="2" filter="url(#rough)">
          <path d="M687 880l6-8 12 0 6-12 7-2 0-14 10-2 6 6 10-2 6-4 10 0 12-4 3 8-8 6-8 0-7 5-6 2-2 8-8 2-4 8-10 0-6 4-8-2-7 4-5 2z"/>
          <path d="M720 852l8 6 8-4M738 848l10 10M700 876l6-6"/>
          <path d="M1036 276l8-2 8-4-4 14 2 10-14 5z"/>
          <path d="M901 1217l10-8 6-18 11-23 14 2 12 6 12-1 12-2 14-3 12-2-4 20-10 18-4 13 18-11 16-8 6 12-12 14-15 10-12 14-12-2-15 6-6 14-11 11-8-13-8-12-8-3-10 4-7-2-6-14z"/>
          <path d="M925 1185l12 9 6 9 12 7 8-12 12-18 6 12 9 16-12 12-13 13M940 1172l-5 14-7 24 14 6 14 6M975 1200l-10 1-18 4M985 1182l-4 14-4 26M952 1190l8 12 10 18M965 1215l9-6 11-4M930 1222l8-6 8 4 3-8M958 1232l6-8 8 6 4-8M996 1182l8 6-6 10-7-6zM1010 1178l10 0-2 8-8-2zM915 1205l10-4 6 8-10 6zM945 1178l8 6-6 8-8-4zM962 1180l8 4-4 10-8-4zM985 1225l-12 8M940 1230l-8 10M955 1245l8 6"/>
          <path d="M1122 1189l10-8 15-13 14 2 14-4 14 2 13-2-12 14-10 8-11 8-3 12 0 13-10 10-10 9-9-3-9-4 3-14 4-15-11-6z"/>
          <path d="M1147 1170l6 14 6 16-6 10-6 10M1160 1172l-3 10 10 4M1138 1190l8 6M1178 1210l10-10 14-11-2 10-4 4-12 4zM1140 1225l10-2 3 8-8 2z"/>
          <path d="M1105 1230l6-2 2 8-7 3zM980 1283l8-3 2 8-8 4zM1019 1280l7 0 1 9-7 2zM1288 1166l12 2 14 2 2 7-18 2zM1350 1188l12 0 16-4-2 14-22 2z"/>
          <path d="M1058 1275l6-10 6-10 8 4 8 4 5 13 6 13-12 1-12 1-4-5-4-5zM1072 1262l4 12 8 6"/>
          <path d="M1113 1293l1-8 1-8 7 2 7 2 6-4 6-4-2 8-2 8-6 2-6 2z"/>
          <path d="M1062 1311l2-7 3-7 4 2 4 3-3 5-3 6zM1084 1309l7 7 7 7 2 8 2 8-6 5-6 5 1 9 1 9-10 5M1092 1322l6 4M1095 1345l-6-2"/>
          <path d="M995 1364l6-8 7-9 10-2 10-2 10-10 10-9-10 14-10 14-5 4-5-5-5-5-4 7-5 7zM1010 1350l6 2M1030 1342l4 8"/>
          <path d="M1008 1325l3-6 4-6 2 10zM1042 1362l11 0 11 0-10 3-10 3zM1089 1372l-10 9-10 9-1 12-12-10-8-6 8-7 8-7zM1068 1382l4 10M1055 1386l6 8"/>
          <path d="M1106 1368l7-2 7-1-2 8zM1120 1380l8 2 2 10-10-2zM1060 1337l12 4 12 4 4 8 4 8-8-3-8-3z"/>
          <path d="M1164 1366l12-10 12-12 13-12 12-10 12-4 13-3 12-3 13-3 15 3 14 4 1 22 0 22-15 15-15 14 5 15 6 15-13 6-13 5-13 6-13 6-12 3-12 3-12 3-12 3 0-13 0-14 18-12 18-13-14-10-15-11z"/>
          <path d="M1190 1352l12 6 12 6 11-8 11-8 11 6 11 6 9-11 9-11M1230 1322l-3 15-3 15M1262 1312l-8 18-8 18 11 6 11 6M1240 1370l-11 7-11 7M1278 1330l-5 11-5 11M1215 1420l17-9 17-9-2-14-2-14M1200 1438l10-12 10-12 15 2 15 2M1190 1400l7 5 7 5M1228 1400l6 14 6 14M1270 1345l8-3 8-3M1180 1340l11 5 11 5M1205 1330l8 8-6 8-8-6zM1244 1325l8 4-4 10-8-4zM1265 1325l10 0-2 8-8 0zM1280 1348l8 6-6 8-8-6zM1286 1326l-6 6 8 6zM1232 1360l8 6-6 8-8-4zM1196 1372l8 6-6 6-6-6zM1215 1395l8 2-2 8-8-2zM1250 1395l8 4-4 8-8-4zM1238 1415l10 2-4 8-8-2zM1180 1440l8-6 4 8-8 4zM1265 1372l8-8M1255 1352l-6 8M1210 1358l-8 4M1224 1382l10 8M1205 1420l12 6"/>
        </g>
      </svg>
    </section>

    <aside class="rdock">
      <div class="dockh"><span>工具箱</span><span class="fl"><b></b><b class="x"></b></span></div>
      <div class="rbar">
        <i class="st"><svg><use href="#ttool"/></svg></i><i class="st"><svg><use href="#pyd"/></svg></i><i class="st"><svg><use href="#clk2"/></svg></i><i class="st"><svg><use href="#docl"/></svg></i><b class="ss"></b><i class="st"><svg><use href="#penn"/></svg></i><b class="ss"></b><i class="st"><svg><use href="#wrench"/></svg></i>
      </div>
      <div class="rsearch">
        <svg class="sico" viewBox="0 0 24 24"><circle cx="10" cy="10" r="7" fill="none" stroke="#999" stroke-width="2"/><path d="M15 15l6 7" stroke="#999" stroke-width="3"/></svg>
        <span class="stext">修正几何图形</span>
        <svg class="sclr" viewBox="0 0 24 18"><path d="M7 1h16v16H7l-6-8z" fill="#9aa0a6"/><path d="M11 5l8 8M19 5l-8 8" stroke="#fff" stroke-width="2"/></svg>
      </div>
      <div class="ttree">
        <div class="tr"><b class="tw down"></b><svg class="tq"><use href="#qgis"/></svg><span>矢量几何图形</span></div>
        <div class="tr sub"><svg class="tg"><use href="#gearb"/></svg><span>修正几何图形</span></div>
      </div>
      <div class="dockh id"><span>识别结果</span><span class="fl"><b></b><b class="x"></b></span></div>
      <div class="rbar idb">
        <i class="st"><svg><use href="#cexp"/></svg></i><b class="ss w12"></b><i class="st"><svg><use href="#tdn"/></svg></i><i class="st"><svg><use href="#tup"/></svg></i><i class="st"><svg><use href="#tst"/></svg></i><b class="ss w12"></b><i class="st"><svg><use href="#desel"/></svg></i><b class="ss w12"></b><i class="st"><svg><use href="#copy"/></svg></i><i class="st"><svg><use href="#print"/></svg></i><b class="ss w12"></b><i class="st"><svg><use href="#idsel"/></svg></i><b class="c c14"></b><i class="st"><svg><use href="#wrench"/></svg></i><b class="ss w12"></b><i class="st"><svg><use href="#help"/></svg></i>
      </div>
      <div class="thead"><span class="c1">要素</span><span class="c2">值</span></div>
      <div class="tbody"></div>
      <div class="mode"><span class="mlbl">模式</span><div class="combo wide"><span>当前图层</span><b class="ar"></b></div></div>
      <div class="mode dis"><span class="mlbl">视图</span><div class="combo small"><span>树</span><b class="ar"></b></div></div>
    </aside>
  </main>

  <footer class="status">
    <div class="ssearch">
      <svg class="sico" viewBox="0 0 24 24"><circle cx="10" cy="10" r="7" fill="none" stroke="#888" stroke-width="2"/><path d="M15 15l6 7" stroke="#888" stroke-width="3"/></svg>
      <span>搜索 <span class="lat">(Ctrl+K)</span></span>
    </div>
    <span class="msg"><span class="lat">2</span> 个图例条目已移除。</span>
    <span class="sp"></span>
    <span>坐标</span>
    <span class="sf coord lat">32.485°, 116.927°</span>
    <svg class="mouse"><use href="#mico"/></svg>
    <span>比例</span>
    <span class="sf scale lat">1:517061<b class="ar"></b></span>
    <svg class="lock" viewBox="0 0 20 30"><path d="M5 14V8a5 5 0 0 1 10 0v6" fill="none" stroke="#777" stroke-width="3"/><rect x="1" y="14" width="18" height="15" rx="2" fill="#777"/></svg>
    <span>放大镜</span>
    <span class="sf spin mag lat">100%<b class="arrs"></b></span>
    <span>旋转角度</span>
    <span class="sf spin rot lat">0.0°<b class="arrs"></b></span>
  </footer>

  <div class="menu m1">
    <div class="mit hot">地理处理工具(<u>G</u>)<b class="sub"></b></div>
    <div class="mit">几何图形工具(<u>E</u>)<b class="sub"></b></div>
    <div class="mit">分析工具(<u>A</u>)<b class="sub"></b></div>
    <div class="mit">研究工具(<u>R</u>)<b class="sub"></b></div>
    <div class="mit">数据管理工具(<u>D</u>)<b class="sub"></b></div>
  </div>
  <div class="menu m2">
    <div class="mit i"><svg viewBox="0 0 24 24"><path d="M2 2h20v7H9v13H2z" fill="#6e8ca6" stroke="#4d6a82"/><path d="M6 6h16v3H9v13H6z" fill="#bfcedb"/></svg>缓冲区...</div>
    <div class="mit i"><svg viewBox="0 0 24 24"><rect x="2" y="9" width="13" height="13" fill="#d9e4d8" stroke="#7b8b7a" stroke-dasharray="2 1"/><circle cx="14" cy="9" r="8" fill="#cfe0c8" stroke="#7b8b7a" stroke-dasharray="2 1"/><path d="M7 9h8v8H7z" fill="#6e8ca6"/></svg>裁剪...</div>
    <div class="mit i"><svg viewBox="0 0 24 24"><path d="M8 2h14v12l-8 9-12-9z" fill="#6e8ca6" stroke="#4d6a82"/><path d="M10 6h8v6l-5 6-7-6z" fill="#bfcedb"/></svg>凸包...</div>
    <div class="mit i"><svg viewBox="0 0 24 24"><rect x="2" y="9" width="13" height="13" fill="#6e8ca6"/><circle cx="15" cy="9" r="7.500" fill="#cfe0c8" stroke="#7b8b7a" stroke-dasharray="2 1"/></svg>差集...</div>
    <div class="mit i"><svg viewBox="0 0 24 24"><rect x="2" y="9" width="13" height="13" fill="#6e8ca6"/><circle cx="15" cy="9" r="8" fill="#6e8ca6"/></svg>融合...</div>
    <div class="mit i"><svg viewBox="0 0 24 24"><rect x="2" y="9" width="13" height="13" fill="#e6ece6" stroke="#7b8b7a" stroke-dasharray="2 1"/><circle cx="14" cy="9" r="8" fill="#e6ece6" stroke="#7b8b7a" stroke-dasharray="2 1"/><path d="M7 9h8v8H7z" fill="#6e8ca6"/></svg>相交...</div>
    <div class="mit i hot"><svg viewBox="0 0 24 24"><rect x="2" y="9" width="13" height="13" fill="#6e8ca6"/><circle cx="14" cy="9" r="8" fill="#6e8ca6"/><path d="M7 9h8v8H7z" fill="#cfd6dc"/></svg>交集取反...</div>
    <div class="mit i"><svg viewBox="0 0 24 24"><rect x="2" y="9" width="13" height="13" fill="#6e8ca6"/><circle cx="14" cy="9" r="8" fill="#6e8ca6"/><path d="M7 9h8v8" fill="none" stroke="#cfd6dc"/></svg>联合...</div>
    <div class="mit i"><svg viewBox="0 0 24 24"><path d="M4 6l16-2-2 16-14 2z" fill="#6e8ca6"/><path d="M9 10h6v6H9z" fill="#e8eef3"/></svg>清除选中的多边形...</div>
  </div>

  <div class="dlg">
    <div class="dtitle"><svg viewBox="0 0 16 16"><path d="M1 1l14 14M15 1L1 15" stroke="#8a8a8a" stroke-width="1.200"/></svg></div>
    <div class="dbody">
      <div class="dleft">
        <div class="tabs"><span class="tab on">参数</span><span class="tab">记录</span></div>
        <div class="panel">
          <div class="strip"></div>
          <div class="pin">
            <div class="lb">输入图层</div>
            <div class="frow">
              <div class="combo fld"><svg class="lic2"><use href="#pgon"/></svg><span>范围 <span class="lat epsg">[EPSG:4326]</span></span><b class="ar"></b></div>
              <svg class="ic28"><use href="#sync"/></svg><svg class="ic32"><use href="#wrench"/></svg>
              <span class="dots btn"><span class="lat">...</span><b class="miniar"></b></span>
            </div>
            <label class="cb dim"><b class="ck"></b>仅选中的要素</label>
            <div class="lb gap">叠加图层</div>
            <div class="frow">
              <div class="combo fld"><svg class="lic2"><use href="#pgon"/></svg><span>已修正几何图形 <span class="lat epsg">[EPSG:3857]</span></span><b class="ar"></b></div>
              <svg class="ic28"><use href="#sync"/></svg><svg class="ic32"><use href="#wrench"/></svg>
              <span class="dots btn"><span class="lat">...</span><b class="miniar"></b></span>
            </div>
            <label class="cb dim"><b class="ck"></b>仅选中的要素</label>
            <div class="adv"><b class="advt"></b>高级参数</div>
            <div class="group">
              <div class="lb g1">叠加字段前缀 <span class="lat">[</span>可选<span class="lat">]</span></div>
              <div class="inp h32"></div>
              <div class="lb g2">网格大小 <span class="lat">[</span>可选<span class="lat">]</span></div>
              <div class="inp sbx"><span>未设置</span><b class="arrs light"></b></div>
            </div>
            <div class="lb g3">交集取反</div>
            <div class="frow outr">
              <div class="inp grow ph"><span class="lat">[</span>创建临时图层<span class="lat">]</span></div>
              <span class="dots btn tall"><span class="lat">...</span><b class="miniar"></b></span>
            </div>
            <label class="cb"><b class="ck on"></b>执行算法后打开输出文件</label>
          </div>
        </div>
      </div>
      <div class="dsplit"><b class="tri"></b><b class="ddots"></b></div>
      <div class="dhelp">
        <h2>交集取反</h2>
        <p>该算法从输入和叠加图层提取不重叠的要素部分，两图层之间的重叠区域被删除。交集取反图层的属性表包含输入和叠加图层的原始属性。</p>
      </div>
    </div>
    <div class="prog"><div class="pbar">完成</div><span class="btn dbtn off">取消</span></div>
    <div class="actions">
      <span class="btn advb">高级<b class="ar"></b></span>
      <span class="btn batch">以批处理方式运行<span class="lat">...</span></span>
      <span class="sp"></span>
      <span class="btn dbtn">运行</span>
      <span class="btn dbtn"><span class="lat">Close</span></span>
      <span class="btn dbtn"><span class="lat">Help</span></span>
    </div>
  </div>

  <div class="ime">
    <svg class="slogo" viewBox="0 0 46 40"><path d="M10 0h30l6 30-14 10H4L0 12z" fill="#f2521d"/><path d="M34 9H17c-3 0-4 2-4 4s1 4 4 4h13c3 0 4 3 4 6s-2 6-5 6H11" fill="none" stroke="#fff" stroke-width="6"/></svg>
    <span class="zh">中</span>
    <span class="imed">°,</span>
    <svg class="iic" viewBox="0 0 20 26"><rect x="6" y="1" width="8" height="15" rx="4" fill="#0a74d8"/><path d="M2 11c0 11 16 11 16 0M10 19v6" fill="none" stroke="#0a74d8" stroke-width="2"/></svg>
    <svg class="iic w" viewBox="0 0 26 20"><rect x="1" y="2" width="24" height="16" rx="2" fill="#0a74d8"/><path d="M4 7h18M4 12h18M8 3v14M13 3v14M18 3v14" stroke="#fff"/></svg>
    <svg class="iic w" viewBox="0 0 26 22"><path d="M7 1l6 3 6-3 6 6-4 3v11H5V10L1 7z" fill="#0a74d8"/></svg>
    <svg class="iic w" viewBox="0 0 24 24"><path d="M1 2h9v9H1zM14 2h9v9h-9zM1 14h9v9H1zM14 14h9v9h-9z" fill="#0a74d8"/></svg>
    <span class="mark">CSDN @GISHUB</span>
  </div>
  <div class="sidetab"></div>
</div>
</body>
</html>
```

FILE: styles.css
```css
html,body{margin:0;padding:0;width:2559px;height:1524px;overflow:hidden;background:#f0f0f0}
body{font-family:"Noto Sans CJK SC","Noto Sans",sans-serif;font-size:18px;color:#111}
.defs{position:absolute;width:0;height:0;overflow:hidden}
.lat{font-family:"Liberation Mono",monospace;font-size:15px}
.epsg{margin-left:4px;font-size:16px}
.svgt{font:bold 11px "Liberation Serif",serif}
.svgb{font:18px "Liberation Sans",sans-serif}
.svgq{font:22px "Liberation Sans",sans-serif}
.svgA{font:bold 30px "Liberation Sans",sans-serif}
.svgT{font:bold 30px "Liberation Serif",serif}
.svgc{font:bold 13px "Liberation Sans",sans-serif}
.app{position:relative;width:2559px;height:1524px;display:flex;flex-direction:column;overflow:hidden}

.title{height:34px;background:#ebf3fa;display:flex;align-items:center;flex:none}
.tlogo{width:27px;height:30px;margin-left:2px}
.ttext{margin-left:4px;color:#222}
.wctl{margin-left:auto;display:flex;gap:53px;padding-right:27px}
.wctl svg{width:17px;height:17px}

.menubar{height:30px;flex:none;display:flex;align-items:center;padding-left:9px;background:#f0f0f0;line-height:30px}
.mi{padding:0 6px;margin-right:10px;height:30px}
.mi.on{background:#0078d7;color:#fff;margin-left:-1px;margin-right:8px}

.tb{height:56px;flex:none;display:flex;align-items:center;background:linear-gradient(#fbfbfb,#f2f2f2);border-top:2px solid #c9c9c9;overflow:hidden}
.tb i,.lt,.st,.ind{font-style:normal}
.t{width:49.500px;height:46px;flex:none;display:flex;align-items:center;justify-content:center;box-sizing:border-box}
.t svg{width:36px;height:36px;display:block}
.t.act{background:#dcdcdc;border:1px solid #b5b5b5;border-radius:4px}
.h{flex:none;height:36px;display:flex;justify-content:center}
.h::after{content:"";width:3px;height:36px;border-left:2px dotted #bdbdbd;border-right:2px dotted #bdbdbd}
.w18{width:18px}
.w22{width:22px}.w25{width:25px}.w26{width:26px}.w31{width:31px}
.s{flex:none;width:11px;height:36px;display:flex;justify-content:center}
.s::after{content:"";width:2px;background:#dedede}
.c{flex:none;width:16px;height:46px;display:flex;align-items:center;justify-content:center}
.c::after{content:"";border-top:8px solid #666;border-left:6px solid transparent;border-right:6px solid transparent}
.c18{width:18px}.c20{width:20px}.c14{width:14px}
.c.act2{background:#dcdcdc;border:1px solid #b5b5b5;border-radius:4px;box-sizing:border-box}
.under{flex:none}
.under.r1{width:544px}.under.r2{width:532px}.under.r3{width:503px}
.gap7{flex:none;width:7px}
.more{font-size:24px;color:#444;line-height:1;flex:none}
.more.mr1{margin-left:6px}
.more.mr2{margin-left:auto;margin-right:13px}

.main{flex:1;display:flex;min-height:0;border-top:2px solid #c9c9c9}
.leftbar{width:77px;flex:none;box-sizing:border-box;background:linear-gradient(90deg,#fafafa,#ececec);border-right:2px solid #c9c9c9;display:flex;flex-direction:column;align-items:flex-start;padding-left:11px}
.vgrip{width:24px;height:6px;margin:8px 0 5px 17px;border-top:2px dotted #c9c9c9;border-bottom:2px dotted #c9c9c9;flex:none;box-sizing:border-box}
.lt{display:flex;align-items:center;height:48px;flex:none;position:relative}
.lt svg{width:36px;height:36px}
.lt.cd::after{content:"";margin-left:9px;border-top:7px solid #666;border-left:6px solid transparent;border-right:6px solid transparent}

.layers{width:277px;flex:none;box-sizing:border-box;display:flex;flex-direction:column;padding-left:2px;border-right:1px solid #c9c9c9}
.dockh{height:32px;flex:none;display:flex;align-items:center;justify-content:space-between;padding:0 8px 3px 3px;box-sizing:border-box}
.fl{display:flex;gap:5px}
.fl b{width:15px;height:15px;border:1px solid #666;border-radius:3px;position:relative;display:block}
.fl b::before{content:"";position:absolute;left:3px;top:3px;width:7px;height:7px;border:1px solid #666;border-radius:1px}
.fl b.x::before{left:1px;top:6px;width:11px;height:2px;border:0;background:#444;transform:rotate(45deg)}
.fl b.x::after{content:"";position:absolute;left:1px;top:6px;width:11px;height:2px;background:#444;transform:rotate(-45deg)}
.lbar{height:43px;flex:none;display:flex;align-items:center;padding:0 0 3px 5px;box-sizing:border-box}
.st{width:37.500px;flex:none;display:flex;justify-content:center;align-items:center}
.st svg{width:26px;height:26px}
.tree{flex:1;background:#fff;margin-right:8px;border-top:1px solid #c4c4c4;min-height:0}
.lr{height:27.100px;display:flex;align-items:center;white-space:nowrap;overflow:hidden}
.tw{width:34px;flex:none;height:12px;display:flex;justify-content:center;align-items:center}
.tw.right::after{content:"";border-left:7px solid #555;border-top:6px solid transparent;border-bottom:6px solid transparent}
.tw.down::after{content:"";border-top:7px solid #666;border-left:6px solid transparent;border-right:6px solid transparent}
.ck{width:20px;height:20px;flex:none;box-sizing:border-box;background:#fff;border:2px solid #d5d5d5;display:block;position:relative}
.ck.on{border-color:#cfcfcf}
.ck.on::after{content:"";position:absolute;left:5.500px;top:1px;width:5px;height:11px;border:solid #000;border-width:0 3px 3px 0;transform:rotate(38deg)}
.lr .ck{margin-left:1px}
.sw{width:24px;height:24px;box-sizing:border-box;margin-left:9px;flex:none;border:1px solid #444;display:block}
.pink{background:#e8708d}.purple{background:#9b78b0}.red{background:#f00}.brick{background:#b34a52}
.yel{background:#fff;border:2px solid #ff0}
.lic{width:24px;height:24px;margin-left:9px;flex:none}
.lic.r{width:20px;height:20px;margin:0 2px 0 11px}
.nm{margin-left:8px;flex:1;min-width:0;overflow:hidden;font-weight:400}
.lr.b .nm{font-weight:700;color:#000}
.lr.g .nm{font-style:italic;color:#7b7b7b;font-weight:700}
.lr.sel{background:#1683dd}
.lr.sel .nm{color:#fff;font-weight:700}
.ind{width:24px;height:24px;flex:none;margin-right:17px;background:#f3f3f3;border:1px solid #e0e0e0;border-radius:3px;display:flex;box-sizing:border-box;align-items:center;justify-content:center}
.ind svg{width:22px;height:22px}
.hscroll{height:21px;flex:none;display:flex;margin-right:8px;padding-right:4px;background:linear-gradient(#fff,#ececec);border-left:1px solid #ccc}
.sb{width:20px;display:flex;align-items:center;justify-content:center;border:1px solid #ccc;flex:none;box-sizing:border-box}
.sb.lf::after{content:"";border-right:6px solid #444;border-top:6px solid transparent;border-bottom:6px solid transparent}
.sb.rt::after{content:"";border-left:6px solid #444;border-top:6px solid transparent;border-bottom:6px solid transparent}
.sbfill{flex:1}

.canvas{width:1612px;flex:none;background:#fff;box-sizing:border-box;border-left:1px solid #ccc;border-right:1px solid #ccc}
.map{display:block;width:1610px;height:1246px}

.rdock{flex:1;min-width:0;display:flex;flex-direction:column;padding-left:10px;box-sizing:border-box}
.rdock .dockh{padding-left:5px;padding-right:2px}
.rbar{height:43px;flex:none;display:flex;align-items:center;padding:0 0 3px 6px;box-sizing:border-box}
.ss{flex:none;width:10px;height:26px;display:flex;justify-content:center}
.ss::after{content:"";width:2px;background:#dcdcdc}
.ss.w12{width:12px}
.rbar .st{width:37px}
.rsearch{height:32px;flex:none;box-sizing:border-box;border:1px solid #b9b9b9;border-bottom-width:2px;border-radius:3px;background:#fff;display:flex;align-items:center}
.sico{width:20px;height:24px;margin:0 10px 0 10px;flex:none}
.stext{color:#333;margin-left:3px}
.sclr{width:22px;height:18px;margin-left:auto;margin-right:12px}
.ttree{height:510px;flex:none;background:#fff;margin-top:2px}
.tr{height:27px;display:flex;align-items:center}
.tr .tw{width:20px;margin-left:6px}
.tq{width:24px;height:24px;margin:0 10px 0 7px}
.tr.sub{background:#f0f0f0;padding-left:66px}
.tg{width:24px;height:24px;margin-right:8px}
.dockh.id{height:50px;padding-bottom:0}
.idb{height:36px;padding:0 0 12px 4.500px}
.thead{height:29px;flex:none;display:flex;background:linear-gradient(#fcfcfc,#efefef);border-bottom:2px solid #c5c5c5;box-sizing:border-box;line-height:29px}
.c1{width:223px;border-right:2px solid #ccc;box-sizing:border-box;padding-left:3px}
.c2{padding-left:5px}
.tbody{height:409px;flex:none;background:#fff;border-bottom:2px solid #c5c5c5;box-sizing:border-box}
.mode{display:flex;align-items:center;padding-left:7px;flex:none;height:36px;margin-top:9px}
.mode.dis{color:#9a9a9a;margin-top:12px;height:32px}
.mlbl{width:45px;flex:none}
.combo{height:36px;box-sizing:border-box;background:linear-gradient(#fdfdfd,#ececec);border:1px solid #b5b5b5;border-bottom-width:2px;border-radius:3px;display:flex;align-items:center;padding:0 8px;position:relative}
.wide{width:523px}
.small{width:106px;height:32px;background:#ececec}
.ar{margin-left:auto;border-top:8px solid #666;border-left:5px solid transparent;border-right:5px solid transparent;flex:none}
.dis .ar{border-top-color:#aaa;margin-right:8px}

.status{height:39px;flex:none;display:flex;align-items:center;padding:0 271px 0 6px;background:#f0f0f0;white-space:nowrap}
.ssearch{width:300px;height:32px;box-sizing:border-box;background:#fff;border:1px solid #b5b5b5;border-radius:3px;display:flex;align-items:center;color:#9a9a9a;margin-top:7px;padding-bottom:3px}
.ssearch .sico{margin:0 12px 0 9px;width:18px}
.msg{margin-left:12px}
.sp{flex:1}
.sf{height:32px;box-sizing:border-box;background:#fff;border:1px solid #c0c0c0;border-bottom-width:2px;border-radius:3px;display:flex;align-items:center;padding-left:4px;margin:7px 0 0 3px;color:#333}
.coord{width:169px;margin-right:5px}
.mouse{width:24px;height:32px;margin-right:23px}
.scale{width:123px;margin-left:1px}
.scale .ar{margin-right:14px}
.lock{width:20px;height:30px;margin:0 12px 0 17px}
.mag{width:131px;margin-left:2px;margin-right:16px}
.rot{width:133px;margin-left:7px}
.arrs{margin-left:auto;width:20px;height:100%;border-left:1px solid #ccc;position:relative;box-sizing:border-box;flex:none}
.arrs::before{content:"";position:absolute;left:3px;top:5px;border-bottom:8px solid #666;border-left:6px solid transparent;border-right:6px solid transparent}
.arrs::after{content:"";position:absolute;left:3px;bottom:5px;border-top:8px solid #666;border-left:6px solid transparent;border-right:6px solid transparent}
.arrs.light::after{border-top-color:#bbb}

.menu{position:absolute;top:65px;background:#fff;border:2px solid #8f8f8f;border-top-width:1px;box-shadow:3px 3px 4px rgba(0,0,0,.35);box-sizing:border-box;z-index:5}
.m1{left:488px;width:245px;height:174px;z-index:6}
.m2{left:732px;width:304px;height:313px}
.mit{height:34.500px;line-height:33px;padding-left:40px;position:relative;white-space:nowrap;box-sizing:border-box}
.mit.i{display:flex;align-items:center;padding:0 0 2px 11px}
.mit.i svg{width:22px;height:22px;margin:2px 7px 0 0;flex:none}
.hot{background:#0078d7;color:#fff}
.mit b.sub{position:absolute;right:8px;top:10px;border-left:7px solid #555;border-top:7px solid transparent;border-bottom:7px solid transparent}
.hot b.sub{border-left-color:#cfe6fa}

.dlg{position:absolute;left:788px;top:336px;width:1033px;height:829px;box-sizing:border-box;background:#efefef;border:1px solid #d0d0d0;border-radius:10px;box-shadow:0 8px 70px rgba(0,0,0,.5);z-index:3;overflow:hidden;display:flex;flex-direction:column}
.dtitle{height:43px;flex:none;background:#f3f3f3;position:relative;display:flex;align-items:center;justify-content:flex-end;padding-right:16px}
.dtitle svg{width:17px;height:17px}
.dbody{display:flex;flex:none;padding:16px 17px 0 16px;box-sizing:border-box;height:660px}
.dleft{width:585px;flex:none;display:flex;flex-direction:column}
.tabs{height:32px;flex:none;display:flex;align-items:flex-end}
.tab{width:71px;height:29px;text-align:center;background:#e5e5e5;border:1px solid #c0c0c0;border-bottom:0;box-sizing:border-box;border-radius:3px 3px 0 0;line-height:28px}
.tab.on{height:33px;background:#fdfdfd;line-height:32px;margin-bottom:-1px;z-index:1;position:relative}
.panel{height:609px;box-sizing:border-box;border:solid #b5b5b5;border-width:2px 1px 2px 0;border-left:2px solid #fff;flex:none}
.strip{height:11px;background:#fdfdfd}
.pin{padding:0 7px}
.lb{height:30px;line-height:30px;margin-bottom:3px}
.lb.gap{margin-top:7px}
.frow{display:flex;align-items:flex-start;height:36px}
.fld{width:403px;flex:none}
.lic2{width:24px;height:20px;margin-right:2px;flex:none}
.ic28{width:33px;height:33px;margin:2px 0 0 15px;flex:none}
.ic32{width:36px;height:36px;margin:0 0 0 19px;flex:none}
.btn{display:inline-flex;align-items:center;justify-content:center;box-sizing:border-box;background:linear-gradient(#fdfdfd,#ececec);border:1px solid #b5b5b5;border-bottom-width:2px;border-radius:3px;position:relative;white-space:nowrap}
.dots{width:47px;height:28px;margin-left:auto;align-items:flex-start;flex:none;background:#f6f6f6}
.dots .lat{font-weight:700;letter-spacing:-4px;line-height:14px;padding-right:4px}
.dots.tall{height:32px}
.dots.tall .lat{line-height:22px}
.miniar{position:absolute;right:3px;bottom:4px;border-top:6px solid #666;border-left:4px solid transparent;border-right:4px solid transparent}
.cb{display:flex;align-items:center;height:20px;margin-top:15px;gap:8px}
.cb.dim{color:#8f8f8f}
.cb.dim .ck{background:#efefef}
.adv{display:flex;align-items:center;gap:14px;font-weight:700;height:29px;margin-top:11px;padding-left:2px;color:#222}
.advt{border-top:12px solid #333;border-left:9px solid transparent;border-right:9px solid transparent}
.group{height:160px;box-sizing:border-box;background:#ebebeb;border:1px solid #dcdcdc;padding:0 18px 0 16px}
.lb.g1{margin:5px 0 4px}
.lb.g2{margin:3px 0 6px}
.lb.g3{margin-top:3px}
.inp{box-sizing:border-box;background:#fff;border:1px solid #b5b5b5;border-bottom-width:2px;border-radius:3px;display:flex;align-items:center;padding-left:5px}
.h32{height:32px}
.sbx{height:29px}
.sbx .arrs::before{top:3px}
.sbx .arrs::after{bottom:3px}
.outr{height:32px}
.grow{width:509px;height:32px;flex:none}
.ph{color:#999}
.dsplit{width:26px;flex:none;position:relative}
.tri{position:absolute;left:10px;top:2px;border-left:6px solid #444;border-top:6px solid transparent;border-bottom:6px solid transparent}
.ddots{position:absolute;left:12px;top:313px;height:24px;border-left:2px dotted #bbb}
.dhelp{width:387px;flex:none;height:642px;background:#fff;border:solid #c5c5c5;border-width:0 1px 0 1px;box-sizing:border-box;padding:4px 8px 0 6px}
.dhelp h2{margin:0;font-size:27px;font-weight:400;color:#444;line-height:34px}
.dhelp p{margin:18px 0 0;line-height:20.500px;color:#707070}
.prog{display:flex;gap:11px;height:29px;flex:none;padding:0 17px 0 16px;margin-top:39px}
.pbar{flex:1;text-align:center;background:#fff;border:1px solid #b5b5b5;border-bottom-width:2px;border-radius:3px;line-height:26px;box-sizing:border-box}
.dbtn{width:118px;height:29px}
.dbtn.off{color:#a5a5a5}
.actions{display:flex;gap:11px;height:29px;flex:none;padding:0 17px 0 16px;margin-top:10px}
.actions .sp{flex:1}
.advb{width:120px;padding:0 10px 0 31px;justify-content:flex-start}
.advb .ar{margin-left:auto;border-top-width:6px}
.batch{width:182px;margin-left:-2px}

.ime{position:absolute;left:2295px;top:1485px;width:264px;height:39px;background:#fff;display:flex;align-items:center;z-index:4}
.slogo{width:46px;height:40px;flex:none}
.zh{font-weight:700;color:#0a74d8;font-size:22px;margin-left:10px}
.imed{font-weight:700;color:#0a74d8;font-size:22px;margin-left:18px;letter-spacing:3px;width:30px}
.iic{width:20px;height:26px;flex:none}
.iic.w{width:24px;height:22px;margin-left:14px}
.mark{position:absolute;right:12px;top:10px;color:rgba(90,90,90,.55);font:15px "Liberation Sans",sans-serif}
.sidetab{position:absolute;right:0;top:1392px;width:7px;height:62px;background:#333;border-radius:3px 0 0 3px;z-index:4}
```
